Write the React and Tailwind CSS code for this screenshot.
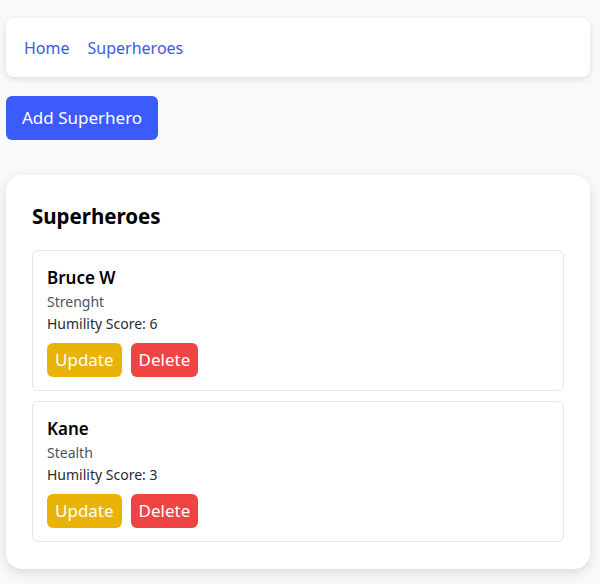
import React from 'react';

const heroes = [
    { id: 1, name: 'Bruce W', power: 'Strenght', humility: 6 },
    { id: 2, name: 'Kane', power: 'Stealth', humility: 3 },
];

export default function App() {
    return (
        <div className="min-h-screen bg-[#f8f9fb] pl-[6px] pr-[10px] pt-[18px] text-black" style={{ fontFamily: '"Noto Sans", "Open Sans", sans-serif' }}>
            {/* nav */}
            <nav className="flex h-[59px] items-center gap-[18px] rounded-lg bg-white px-[18px] shadow-[0_2px_6px_rgba(0,0,0,0.12)]">
                <a className="text-[16px] text-[#3b5bdb]">Home</a>
                <a className="text-[16px] text-[#3b5bdb]">Superheroes</a>
            </nav>

            <button className="mt-[19px] h-[44px] rounded-md bg-[#3b5bfb] px-[16px] text-[17px] text-white">
                Add Superhero
            </button>

            {/* list */}
            <div className="mt-[35px] rounded-[16px] bg-white px-[26px] pt-[27px] pb-[27px] shadow-[0_4px_12px_rgba(0,0,0,0.12)]">
                <h2 className="mb-[19px] text-[20.5px] font-bold leading-[29px]">Superheroes</h2>
                <div className="flex flex-col gap-[10px]">
                    {heroes.map((h) => (
                        <div key={h.id} className="rounded-md border border-[#e5e7eb] px-[14px] pt-[14px] pb-[13px]">
                            <div className="text-[17px] font-semibold leading-[26px]">{h.name}</div>
                            <div className="text-[14px] leading-[22px] text-[#4b5563]">{h.power}</div>
                            <div className="text-[14px] leading-[22px] text-[#1f2937]">Humility Score: {h.humility}</div>
                            <div className="mt-[8px] flex gap-[9px]">
                                <button className="h-[34px] rounded-md bg-[#eab308] px-[8px] text-[17px] text-white">Update</button>
                                <button className="h-[34px] rounded-md bg-[#ef4444] px-[8px] text-[17px] text-white">Delete</button>
                            </div>
                        </div>
                    ))}
                </div>
            </div>
        </div>
    );
}
